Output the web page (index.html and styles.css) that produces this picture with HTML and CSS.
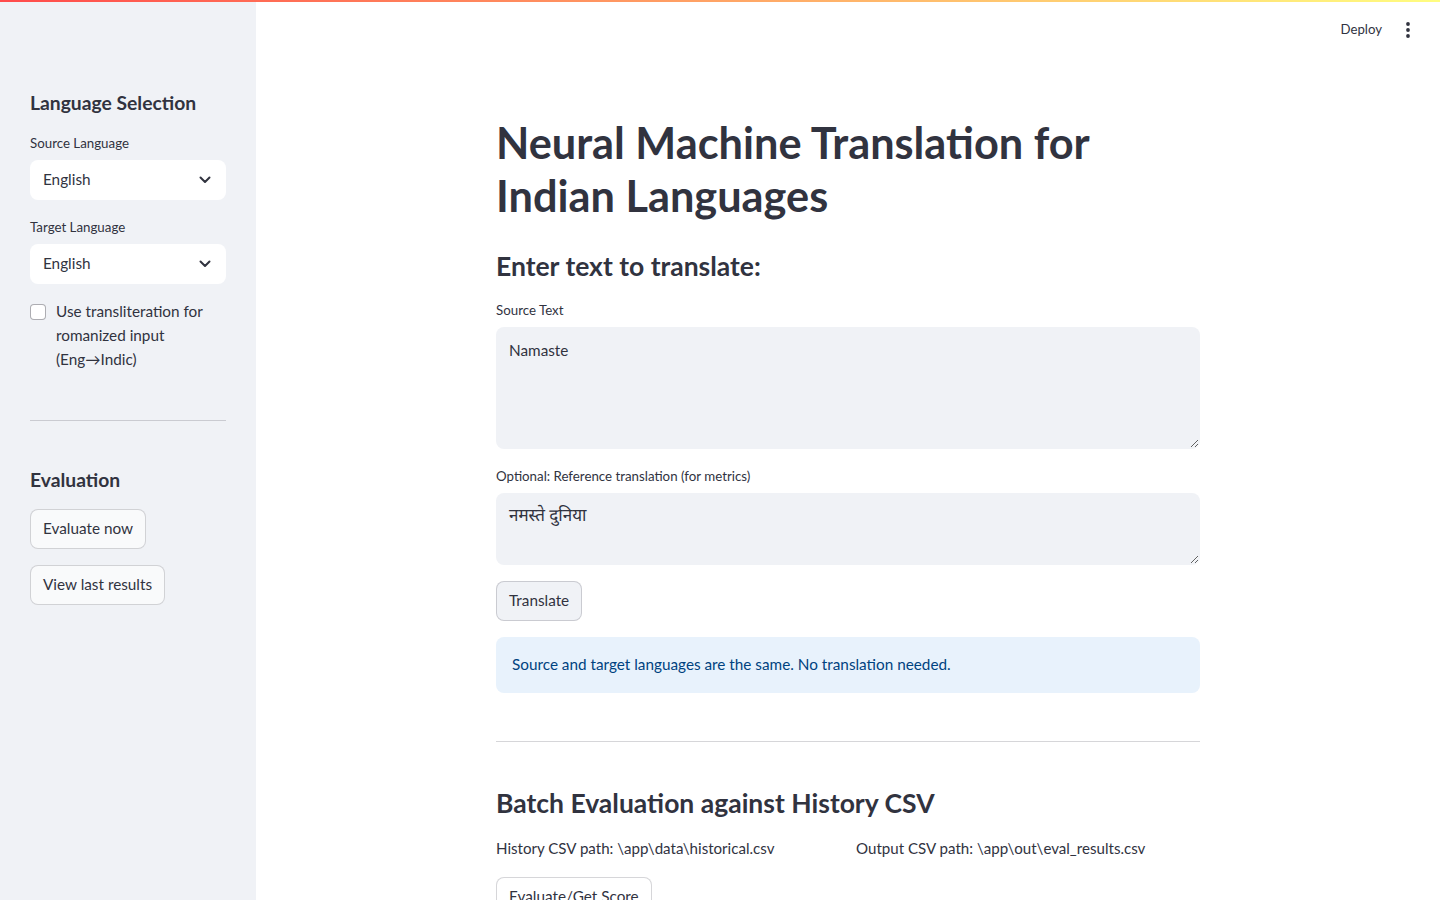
FILE: index.html
```html
<!DOCTYPE html>
<html lang="en">
<head>
<meta charset="utf-8">
<title>Neural Machine Translation for Indian Languages</title>
<link rel="stylesheet" href="styles.css">
</head>
<body>
<div class="decoration"></div>
<div class="app">
  <aside class="sidebar">
    <h2 class="side-heading">Language Selection</h2>
    <div class="field">
      <div class="label">Source Language</div>
      <div class="select">
        <span>English</span>
        <svg class="chev" width="12" height="8" viewBox="0 0 12 8"><path d="M1.5 1.5 L6 6 L10.5 1.5" fill="none" stroke="#31333f" stroke-width="2" stroke-linecap="round" stroke-linejoin="round"/></svg>
      </div>
    </div>
    <div class="field field-2">
      <div class="label">Target Language</div>
      <div class="select">
        <span>English</span>
        <svg class="chev" width="12" height="8" viewBox="0 0 12 8"><path d="M1.5 1.5 L6 6 L10.5 1.5" fill="none" stroke="#31333f" stroke-width="2" stroke-linecap="round" stroke-linejoin="round"/></svg>
      </div>
    </div>
    <label class="check">
      <span class="box"></span>
      <span class="check-text">Use transliteration for romanized input (Eng→Indic)</span>
    </label>
    <hr class="side-hr">
    <h2 class="side-heading eval-heading">Evaluation</h2>
    <button class="btn side-btn">Evaluate now</button>
    <button class="btn side-btn second">View last results</button>
  </aside>
  <main class="main">
    <header class="topbar">
      <span class="deploy">Deploy</span>
      <svg class="kebab" width="4" height="16" viewBox="0 0 4 16"><circle cx="2" cy="2" r="1.9" fill="#31333f"/><circle cx="2" cy="8" r="1.9" fill="#31333f"/><circle cx="2" cy="14" r="1.9" fill="#31333f"/></svg>
    </header>
    <div class="block">
      <h1 class="title">Neural Machine Translation for Indian Languages</h1>
      <h3 class="sub">Enter text to translate:</h3>
      <div class="label main-label">Source Text</div>
      <textarea class="ta ta-big">Namaste</textarea>
      <div class="label main-label ref-label">Optional: Reference translation (for metrics)</div>
      <textarea class="ta ta-small deva">नमस्ते दुनिया</textarea>
      <div><button class="btn translate">Translate</button></div>
      <div class="info">Source and target languages are the same. No translation needed.</div>
      <hr class="main-hr">
      <h3 class="sub batch">Batch Evaluation against History CSV</h3>
      <div class="cols">
        <div class="col">History CSV path: \app\data\historical.csv</div>
        <div class="col">Output CSV path: \app\out\eval_results.csv</div>
      </div>
      <div><button class="btn white">Evaluate/Get Score</button></div>
    </div>
  </main>
</div>
</body>
</html>
```
FILE: styles.css
```css
* { box-sizing: border-box; }
html, body { margin: 0; padding: 0; height: 100%; overflow: hidden; }
body {
  font-family: Lato, "Noto Sans", "Noto Sans Devanagari", sans-serif;
  color: #31333f;
  background: #fff;
}
.decoration {
  height: 2px;
  background: linear-gradient(90deg, #ff4b4b, #fffd80);
}
.app {
  display: grid;
  grid-template-columns: 256px 1fr;
  height: 898px;
}
.sidebar {
  background: #f0f2f6;
  padding: 87px 30px 0 30px;
  display: flex;
  flex-direction: column;
  align-items: flex-start;
}
.side-heading {
  margin: 0;
  font-size: 19.3px;
  line-height: 28px;
  font-weight: 700;
}
.field { width: 100%; margin-top: 16px; }
.field-2 { margin-top: 17px; }
.label {
  font-size: 13.3px;
  line-height: 20px;
  margin-bottom: 7px;
}
.select {
  height: 40px;
  background: #fff;
  border-radius: 8px;
  display: flex;
  align-items: center;
  justify-content: space-between;
  padding: 0 15px 3px 13px;
  font-size: 15.3px;
}
.chev { margin-top: 3px; }
.check {
  margin-top: 15px;
  display: flex;
  gap: 10px;
  font-size: 15.3px;
  line-height: 24px;
}
.box {
  flex: 0 0 16px;
  width: 16px;
  height: 16px;
  margin-top: 5px;
  border: 1px solid rgba(49, 51, 63, 0.4);
  border-radius: 4px;
  background: #fff;
}
.side-hr {
  width: 100%;
  margin: 49px 0 0 0;
  border: none;
  border-top: 1px solid rgba(49, 51, 63, 0.2);
}
.eval-heading { margin-top: 45px; }
.btn {
  font-family: inherit;
  font-size: 15.3px;
  color: #31333f;
  height: 40px;
  padding: 0 12px 3px 12px;
  border-radius: 8px;
  border: 1px solid rgba(49, 51, 63, 0.2);
  background: #f9fafb;
}
.side-btn { margin-top: 15px; }
.side-btn.second { margin-top: 16px; }
.main {
  display: flex;
  flex-direction: column;
  min-width: 0;
}
.topbar {
  height: 56px;
  display: flex;
  justify-content: flex-end;
  align-items: center;
  gap: 24px;
  padding-right: 30px;
}
.deploy { font-size: 13.2px; margin-bottom: 3px; }
.block {
  width: 704px;
  margin: 0 auto;
  display: flex;
  flex-direction: column;
}
.title {
  margin: 58px 0 0 0;
  font-size: 43.3px;
  line-height: 53px;
  font-weight: 700;
}
.sub {
  margin: 27px 0 0 0;
  font-size: 26.5px;
  line-height: 34px;
  font-weight: 700;
}
.main-label { margin-top: 17px; }
.ref-label { margin-top: 17px; }
.ta {
  font-family: inherit;
  font-size: 15.3px;
  line-height: 24px;
  color: #31333f;
  background: #f0f2f6;
  border: 1px solid transparent;
  border-radius: 8px;
  padding: 10px 12px;
  resize: vertical;
  width: 100%;
  outline: none;
}
.ta-big { height: 122px; }
.ta-small { height: 72px; }
.deva { font-family: "Noto Sans Devanagari", "Lohit Devanagari", Lato, sans-serif; font-size: 17px; padding-top: 11px; }
.translate {
  margin-top: 16px;
  background: #f0f2f6;
}
.info {
  margin-top: 16px;
  height: 56px;
  background: #e8f2fc;
  color: #004280;
  border-radius: 8px;
  padding: 0 16px 3px 16px;
  display: flex;
  align-items: center;
  font-size: 15.3px;
}
.main-hr {
  margin: 48px 0 0 0;
  border: none;
  border-top: 1px solid rgba(49, 51, 63, 0.2);
}
.batch { margin-top: 44px; }
.cols {
  margin-top: 16px;
  display: grid;
  grid-template-columns: 1fr 1fr;
  gap: 16px;
  font-size: 15.1px;
  line-height: 24px;
}
.white { margin-top: 17px; background: #fff; }
```
